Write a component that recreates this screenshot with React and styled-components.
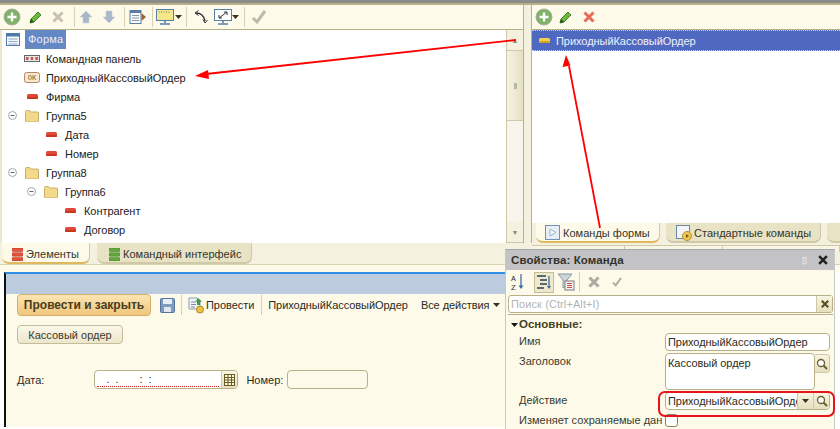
import React from 'react';
import styled, { createGlobalStyle } from 'styled-components';

const Global = createGlobalStyle`
  html, body { margin: 0; padding: 0; background: #fff; }
  body { font-family: "Liberation Sans", Arial, sans-serif; font-size: 11px; color: #2a2a22; }
`;

const Page = styled.div`
  position: relative;
  width: 840px;
  height: 429px;
  overflow: hidden;
  background: #fff;
`;
const TopStrip = styled.div`
  height: 3px;
  background: #8c8c8c;
  border-bottom: 2px solid #b8b088;
`;
const Upper = styled.div`
  display: flex;
  height: 238px;
  background: #f4f1de;
`;
const LeftPanel = styled.section`
  width: 524px;
  flex: none;
  box-sizing: border-box;
  display: flex;
  flex-direction: column;
  border-right: 1px solid #b8b088;
  overflow: hidden;
`;
const RightPanel = styled.section`
  margin-left: 7px;
  flex: 1;
  display: flex;
  flex-direction: column;
  border-left: 1px solid #b8b088;
  overflow: hidden;
`;
const Toolbar = styled.div`
  height: 24px;
  flex: none;
  display: flex;
  align-items: center;
  background: #fdfaea;
  border-bottom: 1px solid #b8b088;
`;
const Slot = styled.span`
  width: ${p => p.$w || 20}px;
  height: 20px;
  flex: none;
  margin-left: ${p => p.$ml || 0}px;
  display: flex;
  align-items: center;
  justify-content: center;
`;
const Sep = styled.span`
  width: 1px;
  height: 20px;
  flex: none;
  margin-left: ${p => p.$ml || 0}px;
  background: #d8d2b4;
`;
const TreeArea = styled.div`
  flex: 1;
  display: flex;
  min-height: 0;
  background: #fff;
  box-shadow: inset 2px 0 0 #ece7cd;
`;
const Tree = styled.div`
  flex: 1;
  overflow: hidden;
`;
const Row = styled.div`
  height: 19px;
  display: flex;
  align-items: center;
  padding-left: ${p => p.$level * 19}px;
  white-space: nowrap;
  font-size: 11px;
  letter-spacing: -0.05px;
  color: #1d2019;
`;
const Toggle = styled.span`
  width: 24px;
  flex: none;
  display: flex;
  justify-content: center;
`;
const RowIcon = styled.span`
  width: 16px;
  margin-right: 6px;
  flex: none;
  display: flex;
  justify-content: center;
`;
const RootRow = styled.div`
  height: 19px;
  display: flex;
  align-items: center;
  padding-left: 6px;
`;
const RootLabel = styled.span`
  margin-left: 5px;
  padding: 0 3px;
  height: 19px;
  line-height: 19px;
  background: #6388c4;
  color: #e8eef8;
  font-size: 11px;
  letter-spacing: 0.2px;
`;
const Scrollbar = styled.div`
  width: 16px;
  display: flex;
  flex-direction: column;
  background: #f8f6ec;
  border-left: 1px solid #cfc9a8;
`;
const ScrollBtn = styled.div`
  height: 20px;
  flex: none;
  display: flex;
  align-items: center;
  justify-content: center;
  background: #f4f1de;
  border-bottom: 1px solid #cfc9a8;
  margin-top: ${p => p.$bottom ? 'auto' : '0'};
  color: #8a8a80;
  font-size: 7px;
`;
const Thumb = styled.div`
  height: 69px;
  display: flex;
  align-items: center;
  justify-content: center;
  background: linear-gradient(90deg, #f6f3e2, #e6e0c2);
  border-bottom: 1px solid #cfc9a8;
`;
const Grip = styled.span`
  width: 3px;
  height: 6px;
  background: #b5b5a8;
`;
const ListArea = styled.div`
  flex: 1;
  background: #fff;
  min-height: 0;
`;
const SelectedRow = styled.div`
  height: 19px;
  display: flex;
  align-items: center;
  padding-left: 7px;
  gap: 6px;
  background: #5069c0;
  border-top: 1px dotted #c8d0ee;
  border-bottom: 1px dotted #c8d0ee;
  color: #eef1fb;
  font-size: 11px;
  letter-spacing: -0.05px;
`;
const TabStrip = styled.div`
  height: 20px;
  flex: none;
  display: flex;
  gap: 6px;
  padding-left: 4px;
  background: #f4f1de;
`;
const Tab = styled.div`
  width: ${p => p.$w}px;
  flex: none;
  display: flex;
  align-items: center;
  gap: ${p => p.$gap ?? 3}px;
  padding-left: ${p => p.$pad || 6}px;
  padding-top: ${p => p.$pt ?? 1}px;
  box-sizing: border-box;
  white-space: nowrap;
  font-size: 11px;
  letter-spacing: 0.02px;
  color: #33342a;
  border-radius: 0 0 7px 7px;
  background: ${p => p.$active ? '#fdfaea' : '#e9e3c6'};
  border-bottom: 2px solid ${p => p.$active ? '#e0b860' : '#cfc9a8'};
  border-right: 1px solid #cfc9a8;
`;
const LowerTabs = styled.div`
  height: 22px;
  display: flex;
  gap: 7px;
  padding-left: 2px;
  background: #f4f1de;
  border-bottom: 1px solid #d8d2b4;
  box-sizing: border-box;
`;
const Stubs = styled.div`
  margin-left: auto;
  width: 308px;
  height: 6px;
  margin-top: 2px;
  display: flex;
  border-top: 1px solid #cfc9a8;
`;
const Stub = styled.span`
  width: ${p => p.$w}px;
  border-right: 1px solid #cfc9a8;
  background: #f8f5e4;
`;
const LowerGap = styled.div`
  height: 7px;
  background: #fdfaea;
`;
const FormWrap = styled.div`
  margin-left: 4px;
  width: 501px;
  height: 155px;
  box-sizing: border-box;
  border-left: 2px solid #111;
  border-top: 2px solid #2f8ee8;
  display: flex;
  flex-direction: column;
`;
const FormHead = styled.div`
  height: 20px;
  flex: none;
  background: #bccbdd;
`;
const FormBody = styled.div`
  flex: 1;
  padding-left: 11px;
  background: #fdfaea;
  display: flex;
  flex-direction: column;
`;
const CommandBar = styled.div`
  height: 22px;
  display: flex;
  align-items: center;
  font-size: 11px;
  letter-spacing: -0.05px;
  white-space: nowrap;
`;
const PrimaryButton = styled.button`
  width: 134px;
  height: 22px;
  padding: 0;
  flex: none;
  border: 1px solid #d6b067;
  border-radius: 4px;
  background: linear-gradient(#fbe6b4, #f0c67c);
  font: bold 12px "Liberation Sans", Arial, sans-serif;
  color: #4a3c1c;
`;
const PlainButton = styled.button`
  align-self: flex-start;
  margin-top: 9px;
  width: 106px;
  height: 19px;
  padding: 0;
  border: 1px solid #c4bd98;
  border-radius: 4px;
  background: linear-gradient(#fbf8ea, #ece6cc);
  font: 11px "Liberation Sans", Arial, sans-serif;
  color: #3a3a2c;
`;
const BarText = styled.span`
  margin-left: ${p => p.$ml || 0}px;
`;
const DateRow = styled.div`
  margin-top: 26px;
  display: flex;
  align-items: center;
  font-size: 11px;
`;
const Field = styled.div`
  width: ${p => p.$w}px;
  height: ${p => p.$h || 19}px;
  flex: none;
  box-sizing: border-box;
  margin-left: ${p => p.$ml || 0}px;
  display: flex;
  align-items: ${p => p.$top ? 'flex-start' : 'center'};
  border: 1px solid #b8b088;
  border-radius: 4px;
  background: ${p => p.$filled ? '#fff' : '#fdfaea'};
  overflow: hidden;
  font-size: 11px;
  letter-spacing: -0.05px;
  color: #2c2c24;
  white-space: nowrap;
`;
const FieldText = styled.span`
  flex: 1;
  min-width: 0;
  overflow: hidden;
  padding: ${p => p.$top ? '2px' : '0'} 0 0 2px;
  line-height: 14px;
`;
const MaskText = styled.span`
  flex: 1;
  margin: 0 2px 0 2px;
  padding-top: 1px;
  white-space: pre;
  line-height: 13px;
  border-bottom: 1px dotted #d02020;
`;
const FieldBtn = styled.span`
  width: 15px;
  align-self: stretch;
  flex: none;
  display: flex;
  align-items: center;
  justify-content: center;
  background: linear-gradient(#f8f4e0, #e6dfbf);
  border-left: 1px solid #cfc9a8;
`;
const FieldGroup = styled.div`
  display: flex;
  align-items: flex-start;
`;
const SideBtn = styled.span`
  width: 15px;
  height: 19px;
  box-sizing: border-box;
  margin-top: 1px;
  display: flex;
  align-items: center;
  justify-content: center;
  background: linear-gradient(#f8f4e0, #e6dfbf);
  border: 1px solid #cfc9a8;
  border-left: none;
  border-radius: 0 4px 4px 0;
`;
const Props = styled.aside`
  position: absolute;
  left: 505px;
  top: 249px;
  width: 330px;
  height: 180px;
  display: flex;
  flex-direction: column;
  background: #fdfaea;
  border-top: 1px solid #a8a8a8;
  border-left: 1px solid #c8c8c8;
  border-right: 1px solid #c8c8c8;
  box-sizing: border-box;
`;
const PropsHead = styled.div`
  height: 20px;
  flex: none;
  display: flex;
  align-items: center;
  padding-left: 5px;
  background: #c3c3c6;
  font-weight: bold;
  font-size: 11.5px;
  letter-spacing: 0.1px;
  color: #33332c;
`;
const Pin = styled.span`
  margin-left: auto;
  color: #e8e8e8;
  font-size: 9px;
`;
const CloseBox = styled.span`
  margin: 0 5px 0 10px;
  display: flex;
`;
const PropsBar = styled.div`
  height: 24px;
  flex: none;
  display: flex;
  align-items: center;
`;
const ActiveSlot = styled(Slot)`
  height: 21px;
  background: #eee8cc;
  border: 1px solid #c4bd98;
  box-sizing: border-box;
`;
const Search = styled.div`
  margin: 1px 1px 0 2px;
  height: 18px;
  flex: none;
  box-sizing: border-box;
  display: flex;
  align-items: center;
  border: 1px solid #b8b088;
  border-radius: 3px;
  background: #fff;
  color: #b4b4b4;
  font-size: 11px;
  letter-spacing: 0.1px;
`;
const SearchText = styled.span`
  flex: 1;
  padding-left: 2px;
`;
const PropsBody = styled.div`
  margin: 1px 1px 0 2px;
  padding: 3px 0 0 3px;
  flex: 1;
  border-top: 1px solid #b8b088;
`;
const Section = styled.div`
  height: 13px;
  line-height: 13px;
  display: flex;
  align-items: center;
  gap: 1px;
  font-weight: bold;
  font-size: 11.5px;
  color: #45401f;
`;
const PropRows = styled.div`
  margin-top: 2px;
  display: grid;
  grid-template-columns: 146px 165px;
  grid-auto-rows: min-content;
  row-gap: 2px;
  padding-left: 8px;
  font-size: 11px;
  color: #3a3a2e;
`;
const PropLabel = styled.div`
  padding-top: 2px;
  white-space: nowrap;
`;
const NarrowCheck = styled.span`
  width: 13px;
  height: 13px;
  margin-top: 2px;
  box-sizing: border-box;
  display: block;
  background: #fff;
  border: 1px solid #8a8468;
  border-radius: 3px;
`;
const Overlay = styled.svg`
  position: absolute;
  left: 0;
  top: 0;
  pointer-events: none;
`;

const PlusCircle = () => (
  <svg width="18" height="18" viewBox="0 0 18 18">
    <circle cx="9" cy="9" r="8" fill="#7fb268" stroke="#a8b0a0" />
    <path d="M9 4.500v9M4.500 9h9" stroke="#fff" strokeWidth="2.400" />
  </svg>
);
const Pencil = () => (
  <svg width="16" height="16" viewBox="0 0 16 16">
    <path d="M2 14l1-4 7-7 3 3-7 7z" fill="#6fb83e" stroke="#2f6a1c" strokeWidth="0.8" />
    <path d="M2 14l1-4 3 3z" fill="#24501a" />
  </svg>
);
const Cross = ({ color = '#c9bfb4', size = 14 }) => (
  <svg width={size} height={size} viewBox="0 0 14 14">
    <path d="M2.500 2.500l9 9M11.500 2.500l-9 9" stroke={color} strokeWidth="3" />
  </svg>
);
const Arrow = ({ down }) => (
  <svg width="16" height="16" viewBox="0 0 16 16">
    <path
      d={down ? 'M5 2h6v6h3l-6 6-6-6h3z' : 'M8 2l6 6h-3v6H5V8H2z'}
      fill="#a9b8c6"
      stroke="#c8d0d6"
      strokeWidth="0.6"
    />
  </svg>
);
const TableIcon = () => (
  <svg width="18" height="16" viewBox="0 0 18 16">
    <rect x="1" y="1.500" width="11" height="13" fill="#f6f8fb" stroke="#5a7ca0" />
    <rect x="1" y="1.500" width="11" height="2.500" fill="#5a7ca0" />
    <path d="M3 6.500h7M3 9h7M3 11.500h7" stroke="#8a97a5" />
    <path d="M12.500 4l4.500 4-4.500 4z" fill="#a0623c" />
  </svg>
);
const Monitor = ({ plain }) => (
  <svg width="20" height="18" viewBox="0 0 20 18">
    <rect x="1.500" y="1.500" width="17" height="11" fill={plain ? '#fff' : '#f5e88c'} stroke="#5480a8" />
    {plain
      ? <path d="M6 10l8-6M11 4h3v3M6 7v3h3" stroke="#333" fill="none" />
      : <path d="M3.500 4h1M6 4h1M8.500 4h1M11 4h1M13.500 4h1" stroke="#7a7440" />}
    <path d="M10 13v2M5 16h10" stroke="#5480a8" strokeWidth="1.600" />
  </svg>
);
const Caret = ({ color = '#3a3418' }) => (
  <svg width="7" height="4" viewBox="0 0 7 4"><path d="M0 0h7L3.500 4z" fill={color} /></svg>
);
const SwapArrows = () => (
  <svg width="16" height="16" viewBox="0 0 16 16">
    <path d="M3 4c5 0 8 3 9 8" stroke="#333" strokeWidth="1.300" fill="none" />
    <path d="M5.500 1.500L2 4l3.500 2.500M10 10.500l2 3.500 2.500-3" stroke="#333" fill="none" />
  </svg>
);
const Check = ({ color = '#c0b8a4', size = 18 }) => (
  <svg width={size} height={size} viewBox="0 0 18 18">
    <path d="M3 10l4 4 8-11" stroke={color} strokeWidth="3" fill="none" />
  </svg>
);
const RedDash = ({ color = '#e0483a', end = '#c8381e' }) => (
  <svg width="11" height="5" viewBox="0 0 11 5">
    <rect width="11" height="5" rx="1.500" fill={color} />
    <rect y="3" width="11" height="2" rx="1" fill={end} />
  </svg>
);
const Minus = () => (
  <svg width="9" height="9" viewBox="0 0 9 9">
    <circle cx="4.500" cy="4.500" r="4" fill="#fff" stroke="#a8a8a8" />
    <path d="M2.500 4.500h4" stroke="#666" />
  </svg>
);
const Folder = () => (
  <svg width="14" height="12" viewBox="0 0 14 12">
    <path d="M.5 2.500V1.500q0-1 1-1h3l1 1.500h7q1 0 1 1v8q0 1-1 1h-11q-1 0-1-1z" fill="#f3d98a" stroke="#c9ae6a" />
  </svg>
);
const FormIcon = () => (
  <svg width="14" height="13" viewBox="0 0 14 13">
    <rect x=".5" y=".5" width="13" height="12" fill="#f5f8fc" stroke="#527aa6" />
    <rect x=".5" y=".5" width="13" height="3" fill="#527aa6" />
    <path d="M2.500 6h9M2.500 8.500h9M2.500 11h9" stroke="#8fa8c4" />
  </svg>
);
const PanelIcon = () => (
  <svg width="16" height="7" viewBox="0 0 16 7">
    <rect x=".5" y=".5" width="15" height="6" fill="#e8e8e8" stroke="#666" />
    <path d="M2 2h2.500v3H2zM6.700 2h2.500v3H6.700zM11.400 2h2.500v3h-2.500z" fill="#c05a4a" />
  </svg>
);
const OkIcon = () => (
  <svg width="16" height="11" viewBox="0 0 16 11">
    <rect x=".5" y=".5" width="15" height="10" rx="2" fill="#fbe6cf" stroke="#b08a68" />
    <text x="8" y="8" textAnchor="middle" fontSize="7" fontFamily="Liberation Mono, monospace" fill="#663">OK</text>
  </svg>
);
const Stack = ({ color, edge }) => (
  <svg width="11" height="13" viewBox="0 0 11 13">
    <rect y="0" width="11" height="3.500" rx="1" fill={color} stroke={edge} strokeWidth=".5" />
    <rect y="4.700" width="11" height="3.500" rx="1" fill={color} stroke={edge} strokeWidth=".5" />
    <rect y="9.400" width="11" height="3.500" rx="1" fill={color} stroke={edge} strokeWidth=".5" />
  </svg>
);
const CommandTabIcon = () => (
  <svg width="15" height="15" viewBox="0 0 15 15">
    <rect x=".5" y=".5" width="14" height="14" fill="#e8eef5" stroke="#6f93b8" />
    <path d="M5 4l6 3.500L5 11z" fill="#f5f8fc" stroke="#9db4cb" />
  </svg>
);
const StandardTabIcon = () => (
  <svg width="17" height="16" viewBox="0 0 17 16">
    <rect x=".5" y=".5" width="13" height="13" fill="#f2f5f8" stroke="#6f8aa6" />
    <circle cx="11" cy="11" r="4.500" fill="#f0c850" stroke="#b89030" />
    <path d="M10 9l3 2-3 2z" fill="#7a5a10" />
  </svg>
);
const Floppy = () => (
  <svg width="15" height="15" viewBox="0 0 15 15">
    <rect x=".5" y=".5" width="14" height="14" rx="1" fill="#7d9cc0" stroke="#54749c" />
    <rect x="3" y="1" width="9" height="5" fill="#e8eef5" />
    <rect x="4" y="9" width="7" height="5" fill="#dfe6ee" />
  </svg>
);
const PostIcon = () => (
  <svg width="16" height="17" viewBox="0 0 16 17">
    <path d="M1 1h8l3 3v8H1z" fill="#f2f5f9" stroke="#8a9cb0" />
    <path d="M3 5h5M3 7.500h5M3 10h4" stroke="#7e8e9e" />
    <path d="M10 1l4 3.500-2 .2V8H9V4.700L7.500 4.500z" fill="#3f9a4a" />
    <ellipse cx="12" cy="12.500" rx="3.500" ry="3.500" fill="#eec040" stroke="#b08c28" />
  </svg>
);
const Calendar = () => (
  <svg width="11" height="12" viewBox="0 0 11 12">
    <rect x=".5" y=".5" width="10" height="11" fill="#fdf8e0" stroke="#6a5a20" />
    <path d="M.5 3.500h10M.5 6h10M.5 8.500h10M4 .5v11M7.500 .5v11" stroke="#6a5a20" />
  </svg>
);
const Loupe = () => (
  <svg width="12" height="12" viewBox="0 0 12 12">
    <circle cx="5" cy="5" r="3.500" fill="#fff" stroke="#6a5f30" strokeWidth="1.300" />
    <path d="M7.500 7.500L11 11" stroke="#6a5f30" strokeWidth="2" />
  </svg>
);
const SortIcon = () => (
  <svg width="16" height="20" viewBox="0 0 16 20">
    <text x="1" y="9" fontSize="8" fontFamily="Liberation Mono, monospace" fill="#333">A</text>
    <text x="1" y="18" fontSize="8" fontFamily="Liberation Mono, monospace" fill="#333">Z</text>
    <path d="M11 2v14" stroke="#3a6ea8" strokeWidth="1.300" />
    <path d="M8.500 13.500L11 17l2.500-3.500z" fill="#3a6ea8" />
  </svg>
);
const GroupIcon = () => (
  <svg width="16" height="17" viewBox="0 0 16 17">
    <path d="M1 2h9M4 6h7M4 10h7M1 14h7" stroke="#5a6a70" strokeWidth="2" />
    <path d="M13 2v12" stroke="#3a6ea8" strokeWidth="1.300" />
    <path d="M11 12l2 3 2-3z" fill="#3a6ea8" />
  </svg>
);
const FilterIcon = () => (
  <svg width="18" height="18" viewBox="0 0 18 18">
    <path d="M1 1h14l-5 6v5l-4 3V7z" fill="#cdd6dd" stroke="#8a98a2" />
    <rect x="8" y="8" width="9" height="9" fill="#f5f5f5" stroke="#7a7a7a" />
    <path d="M10 10.500h5M10 12.500h5M10 14.500h5" stroke="#c05040" />
  </svg>
);

const treeRows = [
  { level: 0, icon: <PanelIcon />, text: 'Командная панель' },
  { level: 0, icon: <OkIcon />, text: 'ПриходныйКассовыйОрдер' },
  { level: 0, icon: <RedDash />, text: 'Фирма' },
  { level: 0, toggle: true, icon: <Folder />, text: 'Группа5' },
  { level: 1, icon: <RedDash />, text: 'Дата' },
  { level: 1, icon: <RedDash />, text: 'Номер' },
  { level: 0, toggle: true, icon: <Folder />, text: 'Группа8' },
  { level: 1, toggle: true, icon: <Folder />, text: 'Группа6' },
  { level: 2, icon: <RedDash />, text: 'Контрагент' },
  { level: 2, icon: <RedDash />, text: 'Договор' },
  { level: 1, icon: <Folder />, text: '' },
];

export default function App() {
  return (
    <Page>
      <Global />
      <TopStrip />
      <Upper>
        <LeftPanel>
          <Toolbar>
            <Slot $ml={2}><PlusCircle /></Slot>
            <Slot $ml={4}><Pencil /></Slot>
            <Slot $ml={2}><Cross /></Slot>
            <Sep $ml={6} />
            <Slot $ml={1}><Arrow /></Slot>
            <Slot $ml={3}><Arrow down /></Slot>
            <Sep $ml={5} />
            <Slot $ml={3}><TableIcon /></Slot>
            <Sep $ml={4} />
            <Slot $ml={2}><Monitor /></Slot>
            <Slot $w={12} $ml={-3}><Caret /></Slot>
            <Sep $ml={2} />
            <Slot $ml={4}><SwapArrows /></Slot>
            <Slot $ml={2}><Monitor plain /></Slot>
            <Slot $w={12} $ml={-4}><Caret /></Slot>
            <Sep $ml={3} />
            <Slot $ml={4}><Check /></Slot>
          </Toolbar>
          <TreeArea>
            <Tree>
              <RootRow><FormIcon /><RootLabel>Форма</RootLabel></RootRow>
              {treeRows.map((r, i) => (
                <Row key={i} $level={r.level}>
                  <Toggle>{r.toggle && <Minus />}</Toggle>
                  <RowIcon>{r.icon}</RowIcon>
                  {r.text}
                </Row>
              ))}
            </Tree>
            <Scrollbar>
              <ScrollBtn>▲</ScrollBtn>
              <Thumb><Grip /></Thumb>
              <ScrollBtn $bottom>▼</ScrollBtn>
            </Scrollbar>
          </TreeArea>
        </LeftPanel>
        <RightPanel>
          <Toolbar>
            <Slot $ml={2}><PlusCircle /></Slot>
            <Slot $ml={2}><Pencil /></Slot>
            <Slot $ml={3}><Cross color="#e86a5a" /></Slot>
          </Toolbar>
          <ListArea>
            <SelectedRow>
              <RedDash color="#f4d050" end="#d8a020" />
              ПриходныйКассовыйОрдер
            </SelectedRow>
          </ListArea>
          <TabStrip>
            <Tab $w={124} $active $pad={9}><CommandTabIcon />Команды формы</Tab>
            <Tab $w={155} $pad={10} $gap={1}><StandardTabIcon />Стандартные команды</Tab>
            <Tab $w={30} $pad={4} />
          </TabStrip>
        </RightPanel>
      </Upper>
      <LowerTabs>
        <Tab $w={88} $active $pad={10} $pt={3}><Stack color="#e2523c" edge="#a83020" />Элементы</Tab>
        <Tab $w={155} $pad={12} $pt={3}><Stack color="#62a83c" edge="#3c7a22" />Командный интерфейс</Tab>
        <Stubs>
          <Stub $w={93} />
          <Stub $w={98} />
          <Stub $w={117} />
        </Stubs>
      </LowerTabs>
      <LowerGap />
      <FormWrap>
        <FormHead />
        <FormBody>
          <CommandBar>
            <PrimaryButton>Провести и закрыть</PrimaryButton>
            <Slot $ml={6}><Floppy /></Slot>
            <Sep $ml={4} />
            <Slot $ml={4}><PostIcon /></Slot>
            <BarText>Провести</BarText>
            <Sep $ml={7} />
            <BarText $ml={6}>ПриходныйКассовыйОрдер</BarText>
            <BarText $ml={13}>Все действия</BarText>
            <Slot $w={14}><Caret /></Slot>
          </CommandBar>
          <PlainButton>Кассовый ордер</PlainButton>
          <DateRow>
            <span>Дата:</span>
            <Field $w={144} $ml={50} $filled>
              <MaskText>{'   .  .       :  :'}</MaskText>
              <FieldBtn><Calendar /></FieldBtn>
            </Field>
            <BarText $ml={8}>Номер:</BarText>
            <Field $w={81} $ml={4} />
          </DateRow>
        </FormBody>
      </FormWrap>
      <Props>
        <PropsHead>
          Свойства: Команда
          <Pin>▯</Pin>
          <CloseBox><Cross color="#222" size={12} /></CloseBox>
        </PropsHead>
        <PropsBar>
          <Slot $ml={2}><SortIcon /></Slot>
          <ActiveSlot $ml={6}><GroupIcon /></ActiveSlot>
          <Slot $ml={2}><FilterIcon /></Slot>
          <Sep $ml={3} />
          <Slot $ml={4}><Cross color="#b0a8a0" /></Slot>
          <Slot $ml={3}><Check color="#a8ad9c" size={12} /></Slot>
        </PropsBar>
        <Search>
          <SearchText>Поиск (Ctrl+Alt+I)</SearchText>
          <FieldBtn><Cross color="#5a5020" size={10} /></FieldBtn>
        </Search>
        <PropsBody>
          <Section><Caret color="#111" />Основные:</Section>
          <PropRows>
            <PropLabel>Имя</PropLabel>
            <Field $w={165} $h={18} $filled><FieldText>ПриходныйКассовыйОрдер</FieldText></Field>
            <PropLabel>Заголовок</PropLabel>
            <FieldGroup>
              <Field $w={150} $h={37} $filled $top>
                <FieldText $top>Кассовый ордер</FieldText>
              </Field>
              <SideBtn><Loupe /></SideBtn>
            </FieldGroup>
            <PropLabel>Действие</PropLabel>
            <Field $w={165} $h={18} $filled>
              <FieldText>ПриходныйКассовыйОрдер</FieldText>
              <FieldBtn><Caret /></FieldBtn>
              <FieldBtn><Loupe /></FieldBtn>
            </Field>
            <PropLabel>Изменяет сохраняемые дан</PropLabel>
            <NarrowCheck />
          </PropRows>
        </PropsBody>
      </Props>
      <Overlay width="840" height="429" viewBox="0 0 840 429">
        <path d="M516 40L206 74" stroke="#f00" strokeWidth="1.800" />
        <path d="M195 76l13-6 1 9z" fill="#f00" />
        <path d="M600 228L569 66" stroke="#f00" strokeWidth="1.800" />
        <path d="M566 55l-3.500 12 8-1.500z" fill="#f00" />
        <rect x="659" y="392" width="175" height="24" rx="6" fill="none" stroke="#e8141c" strokeWidth="2" />
      </Overlay>
    </Page>
  );
}
